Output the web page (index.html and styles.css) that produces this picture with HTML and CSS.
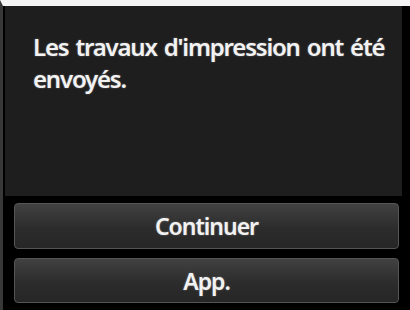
FILE: index.html
```html
<!DOCTYPE html>
<html lang="fr">
<head>
<meta charset="utf-8">
<link rel="stylesheet" href="styles.css">
</head>
<body>
<div class="frame">
  <div class="panel">
    <p class="message">Les travaux d'impression ont été envoyés.</p>
  </div>
  <div class="actions">
    <button class="btn btn-first">Continuer</button>
    <button class="btn btn-second">App.</button>
  </div>
</div>
</body>
</html>
```
FILE: styles.css
```css
html, body {
  margin: 0;
  padding: 0;
  background: #000;
}
.frame {
  width: 410px;
  height: 310px;
  box-sizing: border-box;
  border-top: 6px solid #f4f4f4;
  border-left: 3px solid #383838;
  background: #000;
  display: flex;
  flex-direction: column;
  font-family: "Noto Sans", "DejaVu Sans", sans-serif;
}
.panel {
  margin-left: 2px;
  width: 397px;
  height: 190px;
  background: #1e1e1e;
  box-sizing: border-box;
  padding: 25px 0 0 28px;
}
.message {
  margin: 0;
  color: #f2f2f2;
  font-size: 24px;
  line-height: 32px;
  font-weight: 600;
  letter-spacing: -1.2px;
  word-spacing: 2px;
  width: 365px;
  text-shadow: 0 0 2px rgba(255,255,255,0.35);
}
.actions {
  display: flex;
  flex-direction: column;
  gap: 9px;
  padding: 7px 0 0 11px;
}
.btn {
  width: 385px;
  margin: 0;
  box-sizing: border-box;
  border: 1px solid #555;
  border-radius: 4px;
  background: linear-gradient(#414141, #2c2c2c 55%, #262626);
  color: #f2f2f2;
  font-family: "Noto Sans", "DejaVu Sans", sans-serif;
  font-size: 23px;
  font-weight: 600;
  letter-spacing: -1px;
  padding: 0;
  text-shadow: 0 0 2px rgba(255,255,255,0.35);
}
.btn-first { height: 46px; }
.btn-second { height: 45px; }
```
